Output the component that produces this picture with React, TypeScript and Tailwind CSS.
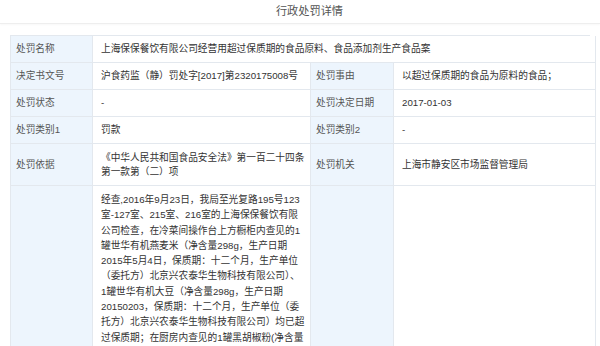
const font = { fontFamily: '"Liberation Sans", "Noto Sans CJK SC", sans-serif' };

const factLines = [
  "经查,2016年9月23日，我局至光复路195号123",
  "室-127室、215室、216室的上海保保餐饮有限",
  "公司检查，在冷菜间操作台上方橱柜内查见的1",
  "罐世华有机燕麦米（净含量298g，生产日期",
  "2015年5月4日，保质期：十二个月，生产单位",
  "（委托方）北京兴农泰华生物科技有限公司）、",
  "1罐世华有机大豆（净含量298g，生产日期",
  "20150203，保质期：十二个月，生产单位（委",
  "托方）北京兴农泰华生物科技有限公司）均已超",
  "过保质期；在厨房内查见的1罐黑胡椒粉(净含量",
];

const Label = ({ children }: { children?: React.ReactNode }) => (
  <div className="flex items-center border-b border-r border-[#e3e8ee] bg-[#edf5fd] pl-[5px] text-[#555]">
    {children}
  </div>
);

const Value = ({ children, span }: { children?: React.ReactNode; span?: boolean }) => (
  <div
    className={
      "flex items-center border-b border-r border-[#e3e8ee] bg-white pl-[8px] text-[#333] " +
      (span ? "col-span-3" : "")
    }
  >
    {children}
  </div>
);

export default function App() {
  return (
    <div className="h-[346px] w-[600px] overflow-hidden bg-white text-[9.7px]" style={font}>
      <div className="flex h-[24px] items-center justify-center border-b border-[#eeeeee] pl-[19px] text-[11.2px] text-[#555] shadow-[0_1px_2px_rgba(0,0,0,0.03)]">
        行政处罚详情
      </div>

      <div className="mx-[10px] mt-[11px] grid grid-cols-[82px_218px_83px_202px] grid-rows-[27px_27px_27px_27px_42px_auto] border-l border-t border-[#e3e8ee] leading-[14px]">
        <Label>处罚名称</Label>
        <Value span>上海保保餐饮有限公司经营用超过保质期的食品原料、食品添加剂生产食品案</Value>

        <Label>决定书文号</Label>
        <Value>沪食药监（静）罚处字[2017]第2320175008号</Value>
        <Label>处罚事由</Label>
        <Value>以超过保质期的食品为原料的食品；</Value>

        <Label>处罚状态</Label>
        <Value>-</Value>
        <Label>处罚决定日期</Label>
        <Value>2017-01-03</Value>

        <Label>处罚类别1</Label>
        <Value>罚款</Value>
        <Label>处罚类别2</Label>
        <Value>-</Value>

        <Label>处罚依据</Label>
        <Value>
          <div>
            <div>《中华人民共和国食品安全法》第一百二十四条</div>
            <div>第一款第（二）项</div>
          </div>
        </Value>
        <Label>处罚机关</Label>
        <Value>上海市静安区市场监督管理局</Value>

        <div className="h-[200px] border-b border-r border-[#e3e8ee] bg-[#edf5fd]" />
        <div className="border-b border-r border-[#e3e8ee] pl-[8px] pt-[6px] leading-[15.3px] text-[#333]">
          {factLines.map((l) => (
            <div key={l} className="whitespace-nowrap">
              {l}
            </div>
          ))}
        </div>
        <div className="border-b border-r border-[#e3e8ee] bg-[#edf5fd]" />
        <div className="border-b border-r border-[#e3e8ee] bg-white" />
      </div>
    </div>
  );
}
